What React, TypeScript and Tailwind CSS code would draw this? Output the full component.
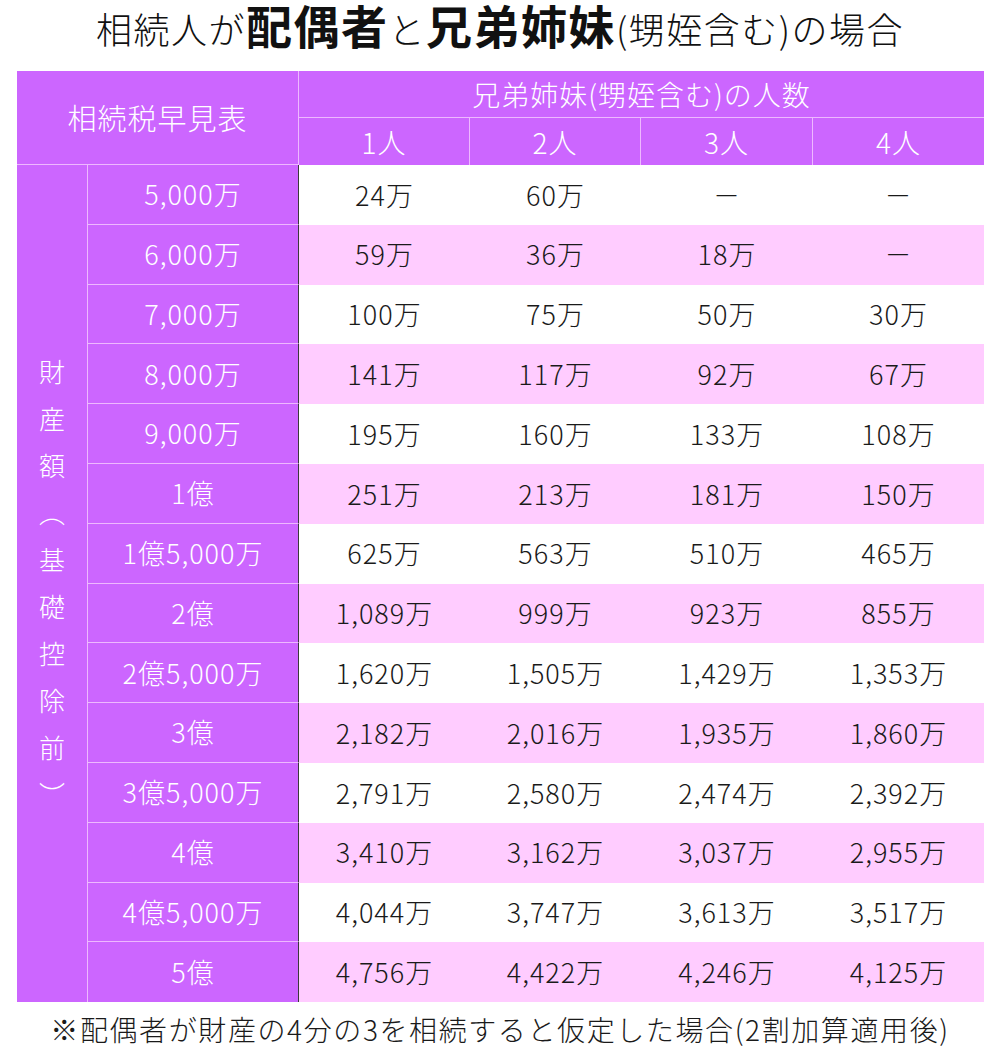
import React from "react";

const labels = [
  "5,000万",
  "6,000万",
  "7,000万",
  "8,000万",
  "9,000万",
  "1億",
  "1億5,000万",
  "2億",
  "2億5,000万",
  "3億",
  "3億5,000万",
  "4億",
  "4億5,000万",
  "5億",
];

const values: string[][] = [
  ["24万", "60万", "－", "－"],
  ["59万", "36万", "18万", "－"],
  ["100万", "75万", "50万", "30万"],
  ["141万", "117万", "92万", "67万"],
  ["195万", "160万", "133万", "108万"],
  ["251万", "213万", "181万", "150万"],
  ["625万", "563万", "510万", "465万"],
  ["1,089万", "999万", "923万", "855万"],
  ["1,620万", "1,505万", "1,429万", "1,353万"],
  ["2,182万", "2,016万", "1,935万", "1,860万"],
  ["2,791万", "2,580万", "2,474万", "2,392万"],
  ["3,410万", "3,162万", "3,037万", "2,955万"],
  ["4,044万", "3,747万", "3,613万", "3,517万"],
  ["4,756万", "4,422万", "4,246万", "4,125万"],
];

const font = { fontFamily: '"Noto Sans CJK JP", "Noto Sans", sans-serif' };

export default function App() {
  return (
    <div className="w-[1000px] h-[1056px] bg-white flex flex-col font-light" style={font}>
      <div className="h-[71px] flex items-start justify-center text-[#111] tracking-[1.5px]">
        <div className="flex items-baseline leading-[1.06]">
          <span className="text-[36px]">相続人が</span>
          <span className="text-[46px] font-bold">配偶者</span>
          <span className="text-[36px]">と</span>
          <span className="text-[46px] font-bold">兄弟姉妹</span>
          <span className="text-[36px]">(甥姪含む)の場合</span>
        </div>
      </div>
      <div className="pl-[17px]">
        <div className="grid grid-cols-[71px_211px_171px_171px_172px_171px] grid-rows-[47px_47px_repeat(14,59.8px)] w-[967px] text-[27px] tracking-[1px]">
          <div className="col-span-2 row-span-2 bg-[#cc66ff] border-r border-b border-[#eeb8ff] flex items-center justify-center text-white text-[29px]">
            相続税早見表
          </div>
          <div className="col-span-4 bg-[#cc66ff] border-b border-[#eeb8ff] flex items-center justify-center text-white text-[28px]">
            兄弟姉妹(甥姪含む)の人数
          </div>
          {["1人", "2人", "3人", "4人"].map((h, i) => (
            <div
              key={h}
              className={`bg-[#cc66ff] border-[#eeb8ff] flex items-center justify-center text-white text-[28px] ${i < 3 ? "border-r" : ""}`}
            >
              {h}
            </div>
          ))}
          <div className="row-span-14 bg-[#cc66ff] border-r border-[#eeb8ff] flex items-center justify-center text-white">
            <span className="[writing-mode:vertical-rl] text-[26px] tracking-[21px] pt-[21px]">財産額（基礎控除前）</span>
          </div>
          {labels.map((label, r) => (
            <React.Fragment key={label}>
              <div
                className={`bg-[#cc66ff] border-r border-r-[#3a3a3a] flex items-center justify-center text-white ${r < 13 ? "border-b border-b-[#eeb8ff]" : ""}`}
              >
                {label}
              </div>
              {values[r].map((v, c) => (
                <div
                  key={c}
                  className={`flex items-center justify-center text-[#1a1a1a] ${r % 2 === 1 ? "bg-[#ffccff]" : "bg-white"}`}
                >
                  {v}
                </div>
              ))}
            </React.Fragment>
          ))}
        </div>
      </div>
      <div className="flex-1 flex items-center justify-center text-[28px] text-[#1a1a1a] tracking-[1.6px]">
        ※配偶者が財産の4分の3を相続すると仮定した場合(2割加算適用後)
      </div>
    </div>
  );
}
